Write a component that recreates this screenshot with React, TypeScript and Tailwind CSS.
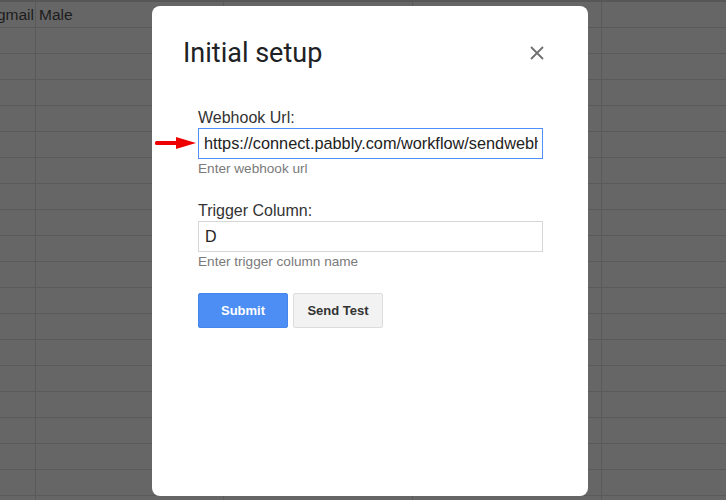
import React from "react";

const colW = ["w-[36px]", "w-[188px]", "w-[189px]", "w-[189px]", "flex-1"];

function Row({ first }: { first?: boolean }) {
  return (
    <div className="flex h-[26px] border-b border-[#5a5a5a]">
      <div className={`${colW[0]} shrink-0 border-r border-[#5a5a5a] overflow-hidden flex items-center justify-end pr-[1px]`}>
        {first && <span className="whitespace-nowrap text-[15.5px] text-[#1c1c1c]">gmail</span>}
      </div>
      <div className={`${colW[1]} shrink-0 border-r border-[#5a5a5a] overflow-hidden flex items-center pl-[3px]`}>
        {first && <span className="whitespace-nowrap text-[15.5px] text-[#1c1c1c]">Male</span>}
      </div>
      <div className={`${colW[2]} shrink-0 border-r border-[#5a5a5a]`} />
      <div className={`${colW[3]} shrink-0 border-r border-[#5a5a5a]`} />
      <div className="flex-1" />
    </div>
  );
}

export default function App() {
  const rows = Array.from({ length: 20 }, (_, i) => i);
  return (
    <div
      className="relative w-[726px] h-[500px] overflow-hidden bg-[#666666]"
      style={{ fontFamily: '"Liberation Sans", Arial, sans-serif' }}
    >
      {/* spreadsheet background */}
      <div className="flex flex-col">
        <div className="h-[2px] bg-[#575757]" />
        {rows.map((i) => (
          <Row key={i} first={i === 0} />
        ))}
      </div>

      {/* dialog */}
      <div className="absolute left-[152px] top-[6px] w-[436px] h-[490px] rounded-[8px] bg-white flex flex-col">
        <div className="flex items-center justify-between pl-[31px] pr-[44px] pt-[31px]">
          <h1
            className="text-[27px] leading-[32px] text-[#202124] font-normal"
            style={{ fontFamily: "Roboto, 'Open Sans', sans-serif" }}
          >
            Initial setup
          </h1>
          <svg width="14" height="14" viewBox="0 0 14 14" className="block">
            <path d="M1 1L13 13M13 1L1 13" stroke="#707070" strokeWidth="1.8" fill="none" />
          </svg>
        </div>

        <div className="flex flex-col pl-[46px] pt-[40px] w-[391px]">
          <label className="text-[16px] leading-[18px] text-[#333333] mb-[1px]">Webhook Url:</label>
          <div className="relative">
            <div className="h-[31px] border border-[#4d90fe] flex items-center pl-[5px] pr-[4px]">
              <div className="flex-1 overflow-hidden">
                <span className="block whitespace-nowrap text-[16.3px] text-[#222222]">
                  https://connect.pabbly.com/workflow/sendwebhookdata/IjU3NjEwNTY
                </span>
              </div>
            </div>
            {/* red arrow */}
            <svg
              width="42"
              height="14"
              viewBox="0 0 42 14"
              className="absolute left-[-43px] top-[8px]"
            >
              <rect x="0" y="5" width="23" height="4" rx="1.5" fill="#ee0000" />
              <polygon points="21,1 41,7 21,13" fill="#ee0000" />
            </svg>
          </div>
          <p className="text-[13.6px] leading-[16px] text-[#7a7a7a] mt-[2px]">Enter webhook url</p>

          <label className="text-[16px] leading-[18px] text-[#333333] mt-[25px] mb-[1px]">Trigger Column:</label>
          <div className="h-[31px] border border-[#d6d6d6] flex items-center pl-[6px]">
            <span className="text-[16px] text-[#222222]">D</span>
          </div>
          <p className="text-[13.6px] leading-[16px] text-[#7a7a7a] mt-[2px]">Enter trigger column name</p>

          <div className="flex gap-[5px] mt-[23px]">
            <button className="w-[90px] h-[35px] rounded-[2px] bg-[#4d8ef5] border border-[#4585ee] text-white text-[13px] font-bold">
              Submit
            </button>
            <button className="w-[90px] h-[35px] rounded-[2px] bg-[#f2f2f2] border border-[#dcdcdc] text-[#333333] text-[13px] font-bold">
              Send Test
            </button>
          </div>
        </div>
      </div>
    </div>
  );
}
